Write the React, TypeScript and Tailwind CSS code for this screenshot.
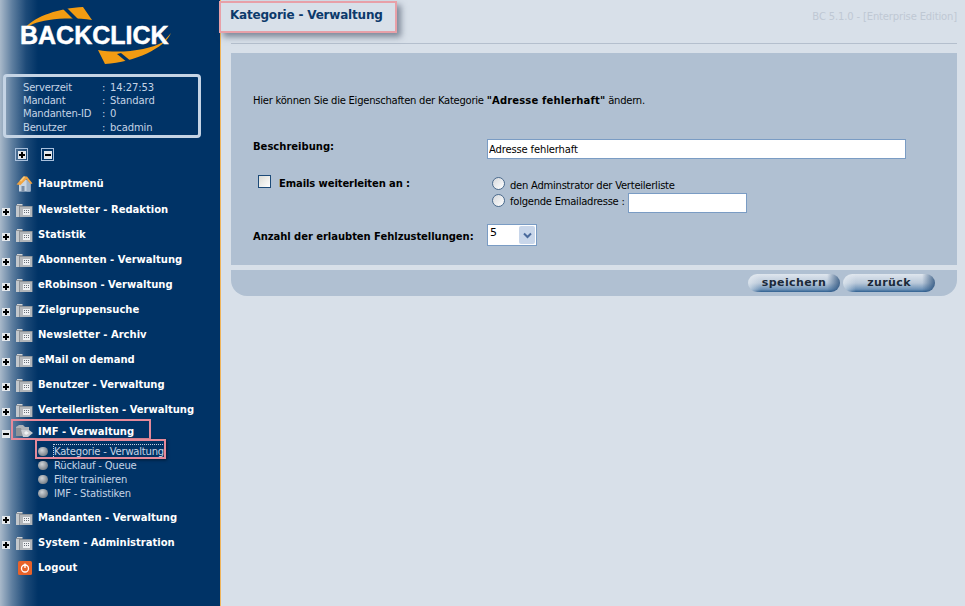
const FONT = "font-['DejaVu_Sans',Verdana,sans-serif]";

function PlusBox({ minus }: { minus?: boolean }) {
  return (
    <svg width="8" height="8" viewBox="0 0 8 8" className="shrink-0">
      <rect width="8" height="8" fill="#e4e8ec" />
      <rect x="1" y="3" width="6" height="2" fill="#000" />
      {!minus && <rect x="3" y="1" width="2" height="6" fill="#000" />}
    </svg>
  );
}

function FolderIcon() {
  return (
    <svg width="17" height="14" viewBox="0 0 17 14" className="shrink-0">
      <path d="M0 2h6l1 1h9.500v11h-16.500z" fill="#8f9499" />
      <path d="M1 1h5l1 1h-6z" fill="#d0d4d8" />
      <rect x="0" y="3" width="3" height="11" fill="#c4c8cc" />
      <rect x="4" y="4" width="12" height="10" fill="#b2b6ba" />
      <rect x="7" y="6" width="7" height="6" fill="#eef0f2" />
      <path d="M8 7h1v1h-1zM10 7h1v1h-1zM12 7h1v1h-1zM8 9h1v1h-1zM10 9h1v1h-1zM12 9h1v1h-1z" fill="#6a7078" />
    </svg>
  );
}

function OpenFolderIcon() {
  return (
    <svg width="17" height="13" viewBox="0 0 17 13" className="shrink-0">
      <path d="M0 2l3-2h4l2 2h4v3h-13z" fill="#aeb3b8" />
      <path d="M0 3h5l2 8h-7z" fill="#8e9398" />
      <path d="M5 5h8l4 3-5 4h-5z" fill="#c9cdd1" />
      <path d="M10 6l3 2-3 2-2-2z" fill="#f0f2f4" />
    </svg>
  );
}

function HomeIcon() {
  return (
    <svg width="17" height="17" viewBox="0 0 17 17" className="shrink-0">
      <path d="M3 7v9.500h11.500v-8l-4-4z" fill="#c9d5e3" />
      <path d="M10.500 4.500l4 4v8h-4z" fill="#9fb2c8" />
      <rect x="5.500" y="11" width="3" height="5.500" fill="#7b8ea6" />
      <path d="M0.500 9.500l7-8h3.500l5.500 7-2 0.500-4-5-6 6z" fill="#f2a440" />
      <path d="M3.500 6l4-4.500h2l-4 5z" fill="#f8cc80" />
    </svg>
  );
}

function LogoutIcon() {
  return (
    <svg width="14" height="14" viewBox="0 0 14 14" className="shrink-0">
      <rect width="14" height="14" rx="1.500" fill="#e8622a" />
      <circle cx="7" cy="7.500" r="3.500" fill="none" stroke="#fff" strokeWidth="1.300" />
      <rect x="6.300" y="2.500" width="1.400" height="4.500" fill="#fff" />
    </svg>
  );
}

function Bullet() {
  return <span className="w-[10px] h-[9px] rounded-full shrink-0 bg-[radial-gradient(circle_at_40%_35%,#d0d4d8,#6f7780_80%)]" />;
}

function Tree({ minus }: { minus?: boolean }) {
  return (
    <div className="w-4 pl-[2px] pt-[4px] flex">
      <PlusBox minus={minus} />
    </div>
  );
}

function MenuRow({ label, icon = "folder" }: { label: string; icon?: "folder" | "home" | "logout" }) {
  return (
    <div className="flex items-center h-[25px]">
      {icon === "folder" ? <Tree /> : <div className="w-4" />}
      <div className="w-[22px] flex">
        {icon === "folder" && <FolderIcon />}
        {icon === "home" && <HomeIcon />}
        {icon === "logout" && <span className="ml-[2px]"><LogoutIcon /></span>}
      </div>
      <span className="text-white font-bold text-[10px] leading-none whitespace-nowrap">{label}</span>
    </div>
  );
}

function SubRow({ label, focus }: { label: string; focus?: boolean }) {
  return (
    <div className="flex items-center h-[14px] pl-[38px] gap-[6px] relative">
      <Bullet />
      <span className={"text-[10px] leading-[13px] tracking-[-0.2px] text-[#c5d4e5] whitespace-nowrap " + (focus ? "outline-1 outline-dotted outline-[#c5d4e5]" : "")}>{label}</span>
      {focus && <div className="absolute left-[35px] top-[-5px] w-[131px] h-[20px] border-2 border-[#e58a9a] shadow-[1px_1px_3px_rgba(0,0,0,0.5)]" />}
    </div>
  );
}

function Logo() {
  return (
    <div className="relative h-[74px]">
      <svg width="180" height="74" viewBox="0 0 180 74" className="absolute left-0 top-0">
        <path d="M25 28C35 16 60 8 83 7L92 20C70 17 45 19 33 24z" fill="#f39c12" />
        <path d="M62 8L66 7L79 20L74 20z" fill="#003366" />
        <path d="M171 33C165 48 135 62 105 64L98 50C120 54 150 50 163 42z" fill="#f39c12" />
        <path d="M117 54L121 53L132 62L128 63z" fill="#003366" />
      </svg>
      <span className="absolute left-[20px] top-[21px] font-['Liberation_Sans',Arial,sans-serif] font-bold text-[25px] leading-[28px] [-webkit-text-stroke:0.5px_white] text-white whitespace-nowrap">BACKCLICK</span>
    </div>
  );
}

function ServerInfo() {
  const rows = [
    ["Serverzeit", "14:27:53"],
    ["Mandant", "Standard"],
    ["Mandanten-ID", "0"],
    ["Benutzer", "bcadmin"],
  ];
  return (
    <div className="mx-[3px] w-[198px] h-[64px] border-[3px] border-[#c5d4e5] rounded-[4px] pt-[4px] pl-[17px]">
      {rows.map(([k, v]) => (
        <div key={k} className="flex h-[13.3px] items-center text-[10px] leading-none text-[#c5d4e5] whitespace-nowrap">
          <span className="w-[79px] tracking-[-0.2px]">{k}</span>
          <span className="w-2">:</span>
          <span className="tracking-[-0.1px]">{v}</span>
        </div>
      ))}
    </div>
  );
}

function Sidebar() {
  return (
    <aside className="w-[221px] shrink-0 h-full border-r border-[#f0b45a] bg-[linear-gradient(90deg,#a9b9ca_0px,#5f7fa0_12px,#1d4a78_26px,#003366_38px)]">
      <Logo />
      <ServerInfo />
      <div className="flex gap-[13px] pl-[15px] mt-[10px] h-[23px]">
        {[false, true].map((m) => (
          <div key={String(m)} className="w-[13px] h-[13px] border border-[#a9c0dc] flex items-center justify-center">
            <PlusBox minus={m} />
          </div>
        ))}
      </div>
      <MenuRow label="Hauptmenü" icon="home" />
      <div className="mt-px">
        {["Newsletter - Redaktion", "Statistik", "Abonnenten - Verwaltung", "eRobinson - Verwaltung", "Zielgruppensuche", "Newsletter - Archiv", "eMail on demand", "Benutzer - Verwaltung", "Verteilerlisten - Verwaltung"].map((l) => (
          <MenuRow key={l} label={l} />
        ))}
      </div>
      <div className="flex items-center h-[19px] relative">
        <Tree minus />
        <div className="w-[22px] flex"><OpenFolderIcon /></div>
        <span className="text-white font-bold text-[10px] leading-none whitespace-nowrap">IMF - Verwaltung</span>
        <div className="absolute left-[11px] top-[-3px] w-[140px] h-[21px] border-2 border-[#e58a9a]" />
      </div>
      <div className="mt-[3px] mb-[5px]">
        <SubRow label="Kategorie - Verwaltung" focus />
        <SubRow label="Rücklauf - Queue" />
        <SubRow label="Filter trainieren" />
        <SubRow label="IMF - Statistiken" />
      </div>
      <MenuRow label="Mandanten - Verwaltung" />
      <MenuRow label="System - Administration" />
      <MenuRow label="Logout" icon="logout" />
    </aside>
  );
}

function Radio() {
  return <span className="w-[13px] h-[13px] rounded-full border border-[#4a6a8c] shrink-0 bg-[linear-gradient(135deg,#d5d8dc,#ffffff)]" />;
}

function Content() {
  return (
    <main className="flex-1 min-w-0 pr-2 text-[10px] tracking-[-0.25px] text-black">
      <div className="flex items-start justify-between h-[44px] border-b border-[#b4bfcd] ml-[10px]">
        <div className="-ml-[12px] mt-px w-[178px] h-[32px] border-2 border-[#e8a0a8] shadow-[4px_4px_6px_rgba(80,90,110,0.65)] pl-[9px] pt-[4px] text-[12px] leading-[16px] font-bold tracking-[-0.2px] text-[#0c3a6b] whitespace-nowrap">
          Kategorie - Verwaltung
        </div>
        <span className="mt-[10px] text-[10px] leading-[13px] tracking-[-0.15px] text-[#bfc8d4] whitespace-nowrap">BC 5.1.0 - [Enterprise Edition]</span>
      </div>
      <section className="ml-[10px] mt-[9px] h-[212px] bg-[#b0c0d2] pl-[22px] pt-[41px]">
        <p className="h-[13px] leading-[13px] whitespace-nowrap">
          Hier können Sie die Eigenschaften der Kategorie <b className="tracking-[0.15px]">"Adresse fehlerhaft"</b> ändern.
        </p>
        <div className="grid grid-cols-[234px_1fr] mt-[32px]">
          <div className="font-bold h-[20px] leading-[16px] tracking-normal">Beschreibung:</div>
          <input readOnly value="Adresse fehlerhaft" className="w-[419px] h-[20px] bg-white border border-[#7a9cc4] px-[1px] text-[10px] tracking-[-0.15px] outline-none" />
          <div className="flex items-start gap-2 h-[13px] mt-[16px] pl-[5px] self-start">
            <span className="w-[13px] h-[13px] border border-[#1c4a78] shrink-0 bg-[linear-gradient(135deg,#dcdcd6,#ffffff)]" />
            <span className="font-bold whitespace-nowrap mt-[2px] leading-[13px] tracking-[-0.1px]">Emails weiterleiten an :</span>
          </div>
          <div className="mt-[17px] pl-[5px]">
            <div className="flex items-center gap-[5px] h-[15px]">
              <Radio />
              <span className="mt-[3px] whitespace-nowrap">den Adminstrator der Verteilerliste</span>
            </div>
            <div className="flex items-center gap-[5px] h-[20px] -mt-[1px]">
              <Radio />
              <span className="w-[113px] mt-[3px] whitespace-nowrap">folgende Emailadresse :</span>
              <input readOnly className="w-[119px] h-[20px] bg-white border border-[#7a9cc4] mt-[6px] outline-none" />
            </div>
          </div>
          <div className="font-bold h-[22px] mt-[14px] pt-[2px] flex items-center whitespace-nowrap tracking-[-0.05px]">Anzahl der erlaubten Fehlzustellungen:</div>
          <div className="mt-[14px] w-[50px] h-[22px] bg-white border border-[#7a9cc4] flex items-center justify-between pl-[2px] pr-px">
            <span className="-mt-[3px] text-[11px]">5</span>
            <span className="w-[16px] h-[18px] rounded-[2px] bg-[#c8d6ea] flex items-center justify-center">
              <svg width="9" height="7" viewBox="0 0 9 7"><path d="M1 1.500l3.500 3.500 3.500-3.500" fill="none" stroke="#4a6a9c" strokeWidth="2" /></svg>
            </span>
          </div>
        </div>
      </section>
      <footer className="ml-[10px] mt-[5px] h-[26px] bg-[#b0c0d2] rounded-b-[16px] flex justify-end items-start gap-[3px] pr-[22px] pt-[4px]">
        {["speichern", "zurück"].map((t) => (
          <button key={t} className="w-[92px] h-[18px] rounded-full border-0 bg-[linear-gradient(90deg,rgba(230,236,242,0.7)_0%,rgba(230,236,242,0)_14%,rgba(30,70,115,0)_86%,rgba(30,70,115,0.75)_100%),linear-gradient(180deg,#dfe6ee_0%,#b9c8d9_50%,#6e93b8_85%,#2f5f8f_100%)] text-[11px] leading-[16px] font-bold tracking-[0.4px] text-[#1b2a3a]">{t}</button>
        ))}
      </footer>
    </main>
  );
}

export default function App() {
  return (
    <div className={"flex w-[965px] h-[606px] overflow-hidden bg-[#d8e0e9] " + FONT}>
      <Sidebar />
      <Content />
    </div>
  );
}
